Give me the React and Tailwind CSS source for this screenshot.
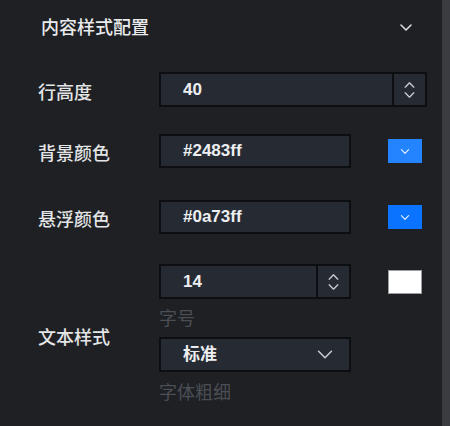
import React from 'react';

const font = { fontFamily: '"Liberation Sans", "Noto Sans CJK SC", sans-serif' };

const Chevron = ({ className = '', up = false, weight = 1.6 }) => (
  <svg viewBox="0 0 12 7" className={className} fill="none" stroke="currentColor" strokeWidth={weight} strokeLinecap="round" strokeLinejoin="round">
    {up ? <path d="M1 6 L6 1 L11 6" /> : <path d="M1 1 L6 6 L11 1" />}
  </svg>
);

const Stepper = () => (
  <div className="flex h-full w-[33px] flex-col items-center justify-center gap-[4px] border-l-2 border-[#0d0e11] text-[#c9cbd0]">
    <Chevron up className="h-[6px] w-[11px]" />
    <Chevron className="h-[6px] w-[11px]" />
  </div>
);

const Swatch = ({ color, arrow = true }) => (
  <div className={`ml-[37px] flex h-[24px] w-[34px] items-center justify-center ${color}`}>
    {arrow && <Chevron className="h-[5px] w-[10px] text-[#e6f0ff]" />}
  </div>
);

const Label = ({ children, className = 'pt-[6px]' }) => (
  <div className={`w-[159px] shrink-0 pl-[38px] text-[18px] font-medium leading-none text-[#e4e5e7] ${className}`}>
    {children}
  </div>
);

const inputBox = 'flex items-center border-2 border-[#0d0e11] bg-[#262b33] text-[17px] font-bold text-[#eceef1]';

export default function App() {
  return (
    <div className="flex h-[426px] w-[450px] bg-[#1e2024]" style={font}>
      <div className="flex-1">
        {/* 标题 */}
        <div className="flex h-[55px] items-center justify-between pl-[41px] pr-[30px]">
          <span className="text-[18px] font-medium leading-none text-[#eaebed]">内容样式配置</span>
          <Chevron className="h-[7px] w-[12px] text-[#d5d7db]" />
        </div>

        {/* 行高度 */}
        <div className="mt-[17px] flex h-[35px] items-center">
          <Label>行高度</Label>
          <div className={`${inputBox} h-[35px] w-[268px]`}>
            <span className="flex-1 pl-[22px]">40</span>
            <Stepper />
          </div>
        </div>

        {/* 背景颜色 */}
        <div className="mt-[27px] flex h-[34px] items-center">
          <Label>背景颜色</Label>
          <div className={`${inputBox} h-[34px] w-[192px] pl-[22px]`}>#2483ff</div>
          <Swatch color="bg-[#2483ff]" />
        </div>

        {/* 悬浮颜色 */}
        <div className="mt-[32px] flex h-[34px] items-center">
          <Label>悬浮颜色</Label>
          <div className={`${inputBox} h-[34px] w-[192px] pl-[22px]`}>#0a73ff</div>
          <Swatch color="bg-[#0a73ff]" />
        </div>

        {/* 文本样式 */}
        <div className="mt-[30px] flex items-center">
          <Label className="mt-[10px]">文本样式</Label>
          <div className="flex flex-col">
            <div className="flex items-center">
              <div className={`${inputBox} h-[35px] w-[192px]`}>
                <span className="flex-1 pl-[22px]">14</span>
                <Stepper />
              </div>
              <Swatch color="bg-white border border-[#9a9ca2]" arrow={false} />
            </div>
            <div className="mb-[9px] mt-[12px] text-[18px] leading-[17px] text-[#4b4e55]">字号</div>
            <div className={`${inputBox} h-[35px] w-[192px] justify-between pl-[22px] pr-[16px]`}>
              <span>标准</span>
              <Chevron weight={1.2} className="h-[9px] w-[16px] text-[#c9cbd0]" />
            </div>
            <div className="mt-[13px] text-[18px] leading-[17px] text-[#4b4e55]">字体粗细</div>
          </div>
        </div>
      </div>
      <div className="h-full w-[8px] bg-[#3a3c41]" />
    </div>
  );
}
